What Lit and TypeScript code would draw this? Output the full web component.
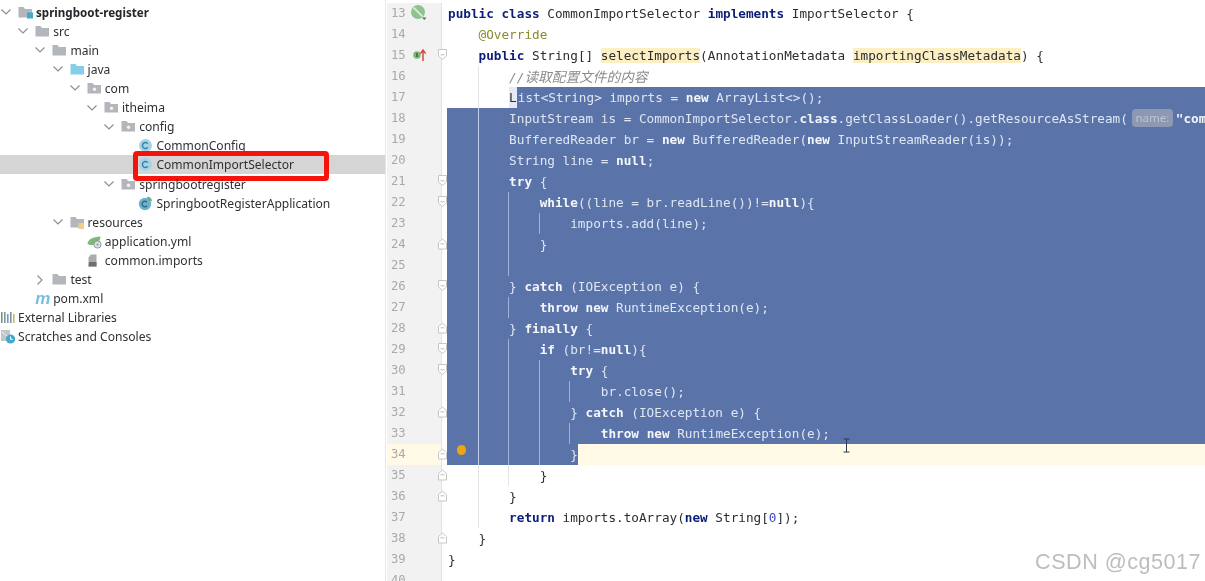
import { LitElement, html, css, svg, nothing } from "lit";
import { customElement } from "lit/decorators.js";

type TreeRow = { d: number; icon: string; label: string; chev?: "down" | "right" | "none"; bold?: boolean; selected?: boolean };

const tree: TreeRow[] = [
  { d: 0, icon: "module", label: "springboot-register", chev: "down", bold: true },
  { d: 1, icon: "folder", label: "src", chev: "down" },
  { d: 2, icon: "folder", label: "main", chev: "down" },
  { d: 3, icon: "blue", label: "java", chev: "down" },
  { d: 4, icon: "pkg", label: "com", chev: "down" },
  { d: 5, icon: "pkg", label: "itheima", chev: "down" },
  { d: 6, icon: "pkg", label: "config", chev: "down" },
  { d: 7, icon: "class", label: "CommonConfig" },
  { d: 7, icon: "class", label: "CommonImportSelector", selected: true },
  { d: 6, icon: "pkg", label: "springbootregister", chev: "down" },
  { d: 7, icon: "spring", label: "SpringbootRegisterApplication" },
  { d: 3, icon: "res", label: "resources", chev: "down" },
  { d: 4, icon: "yml", label: "application.yml" },
  { d: 4, icon: "file", label: "common.imports" },
  { d: 2, icon: "folder", label: "test", chev: "right" },
  { d: 1, icon: "pom", label: "pom.xml" },
  { d: -1, icon: "libs", label: "External Libraries" },
  { d: -1, icon: "scratch", label: "Scratches and Consoles" },
];

type Line = {
  n: number;
  before?: string;
  mark?: string;
  selected?: string;
  caret?: boolean;
  guides?: number[];
  fold?: "down" | "up";
  icon?: "bean" | "impl" | "bulb";
};

const P8 = "        ";
const lines: Line[] = [
  { n: 13, before: "public class CommonImportSelector implements ImportSelector {", icon: "bean" },
  { n: 14, before: "    @Override" },
  { n: 15, before: "    public String[] selectImports(AnnotationMetadata importingClassMetadata) {", fold: "down", icon: "impl" },
  { n: 16, before: P8 + "//读取配置文件的内容", guides: [4] },
  { n: 17, before: P8, mark: "L", selected: "ist<String> imports = new ArrayList<>();", guides: [4] },
  { n: 18, selected: P8 + "InputStream is = CommonImportSelector.class.getClassLoader().getResourceAsStream(⟦name:⟧\"common.imports\");", guides: [4] },
  { n: 19, selected: P8 + "BufferedReader br = new BufferedReader(new InputStreamReader(is));", guides: [4] },
  { n: 20, selected: P8 + "String line = null;", guides: [4] },
  { n: 21, selected: P8 + "try {", guides: [4], fold: "down" },
  { n: 22, selected: P8 + "    while((line = br.readLine())!=null){", guides: [4, 8], fold: "down" },
  { n: 23, selected: P8 + "        imports.add(line);", guides: [4, 8, 12] },
  { n: 24, selected: P8 + "    }", guides: [4, 8], fold: "up" },
  { n: 25, selected: " ", guides: [4, 8] },
  { n: 26, selected: P8 + "} catch (IOException e) {", guides: [4], fold: "down" },
  { n: 27, selected: P8 + "    throw new RuntimeException(e);", guides: [4, 8] },
  { n: 28, selected: P8 + "} finally {", guides: [4], fold: "up" },
  { n: 29, selected: P8 + "    if (br!=null){", guides: [4, 8], fold: "down" },
  { n: 30, selected: P8 + "        try {", guides: [4, 8, 12], fold: "down" },
  { n: 31, selected: P8 + "            br.close();", guides: [4, 8, 12, 16] },
  { n: 32, selected: P8 + "        } catch (IOException e) {", guides: [4, 8, 12], fold: "up" },
  { n: 33, selected: P8 + "            throw new RuntimeException(e);", guides: [4, 8, 12, 16] },
  { n: 34, selected: P8 + "        }", caret: true, guides: [4, 8, 12], fold: "up", icon: "bulb" },
  { n: 35, before: P8 + "    }", guides: [4, 8], fold: "up" },
  { n: 36, before: P8 + "}", guides: [4], fold: "up" },
  { n: 37, before: P8 + "return imports.toArray(new String[0]);", guides: [4] },
  { n: 38, before: "    }", fold: "up" },
  { n: 39, before: "}" },
  { n: 40, before: " " },
];

const TOKEN = /(\b(?:public|class|implements|new|null|try|while|catch|throw|finally|if|return)\b|@Override|selectImports|importingClassMetadata|⟦name:⟧|"common\.imports"|\/\/.*|\b0\b)/;
const KW = /^(public|class|implements|new|null|try|while|catch|throw|finally|if|return)$/;

function tokens(text: string) {
  return text.split(TOKEN).map((t) => {
    if (!t) return nothing;
    if (KW.test(t)) return html`<span class="kw">${t}</span>`;
    if (t === "@Override") return html`<span class="ann">${t}</span>`;
    if (t === "selectImports" || t === "importingClassMetadata") return html`<span class="hl">${t}</span>`;
    if (t === "⟦name:⟧") return html`<span class="hint">name:</span>`;
    if (t.startsWith('"')) return html`<span class="str">${t}</span>`;
    if (t.startsWith("//")) return html`<span class="cm">//<span class="cjk">${t.slice(2)}</span></span>`;
    if (t === "0") return html`<span class="zero">${t}</span>`;
    return t;
  });
}

const folderPath = "M0.5 2h5l1.5 2h7v8.5h-13.5z";

function treeIcon(name: string) {
  const body = (() => {
    switch (name) {
      case "module":
        return svg`<path d=${folderPath} fill="#b3b6bb"/><rect x="9" y="7.5" width="6" height="6" fill="#3fa9d0"/>`;
      case "folder":
        return svg`<path d=${folderPath} fill="#b3b6bb"/>`;
      case "blue":
        return svg`<path d=${folderPath} fill="#86cdea"/>`;
      case "pkg":
        return svg`<path d=${folderPath} fill="#b3b6bb"/><circle cx="7.5" cy="8.2" r="1.7" fill="#f4f4f4"/>`;
      case "res":
        return svg`<path d=${folderPath} fill="#b3b6bb"/><rect x="8.5" y="8" width="5.5" height="6" fill="#f0cd8a"/>`;
      case "class":
        return svg`<circle cx="7.5" cy="7.5" r="6.5" fill="#a5d3e7"/><path d="M9.8 5.6a3 3 0 1 0 0 3.8" fill="none" stroke="#3c7f9f" stroke-width="1.4"/>`;
      case "spring":
        return svg`<circle cx="7" cy="8" r="6.2" fill="#6fb1cf"/><path d="M9 6.2a2.8 2.8 0 1 0 0 3.6" fill="none" stroke="#2f6b87" stroke-width="1.4"/><path d="M9 0.8c3 0 4.8 1.4 5 4.4-2.6.4-4.8-1-5-4.4z" fill="#6cb37a"/>`;
      case "yml":
        return svg`<path d="M0.5 10C1 5 6 3 13.5 2.5 13 8 10 11.5 3 11z" fill="#7db878"/><circle cx="10.5" cy="10.5" r="3.6" fill="#dfe3e8" stroke="#8f979f" stroke-width="1"/><circle cx="10.5" cy="10.5" r="1.1" fill="#8f979f"/>`;
      case "file":
        return svg`<path d="M4 1.5h5.5v12h-8v-9z" fill="#a9abad"/><path d="M2 9h7.5v4.5h-8z" fill="#6d6f72"/>`;
      case "libs":
        return svg`<rect x="1" y="2" width="1.6" height="11" fill="#5aa58a"/><rect x="4" y="2" width="1.6" height="11" fill="#8a8f96"/><rect x="7" y="4" width="1.6" height="9" fill="#5aa5c8"/><rect x="10" y="2" width="1.6" height="11" fill="#8a8f96"/><rect x="13" y="4" width="1.6" height="9" fill="#c9b871"/>`;
      case "scratch":
        return svg`<path d="M1 1h9v5l-4 6h-5z" fill="#c3c6c9"/><path d="M2 3l5 4" stroke="#f4f4f4" stroke-width="1"/><circle cx="10.5" cy="10" r="4.6" fill="#3fa9d0"/><path d="M10.5 7.5v2.8h2.2" fill="none" stroke="#fff" stroke-width="1"/>`;
      default:
        return nothing;
    }
  })();
  return html`<svg class="ticon" viewBox="0 0 15 15" width="15" height="15">${body}</svg>`;
}

function chevron(dir: "down" | "right") {
  const d = dir === "down" ? "M1.5 3.5 6 8l4.5-4.5" : "M3.5 1.5 8 6l-4.5 4.5";
  return html`<svg class="chev" viewBox="0 0 12 12" width="12" height="12"><path d=${d} fill="none" stroke="#8a8c8f" stroke-width="1.1"/></svg>`;
}

function foldMark(dir: "down" | "up") {
  const d = dir === "down" ? "M0.5 0.5h8v6.5l-4 3.5-4-3.5z" : "M0.5 11v-6.5l4-3.5 4 3.5v6.5z";
  return html`<svg class="fold" viewBox="0 0 9 12" width="9" height="12"><path d=${d} fill="#fff" stroke="#c6c6c6" stroke-width="1"/><path d="M2.5 5.8h4" stroke="#bdbdbd" stroke-width="1"/></svg>`;
}

function gutterIcon(name?: string) {
  if (name === "bean")
    return html`<svg class="gicon bean" viewBox="0 0 18 18" width="18" height="18"><circle cx="8" cy="8" r="7" fill="#8fc28c"/><path d="M3.5 3.5l9 9" stroke="#d6ead4" stroke-width="1.8"/><path d="M12 13.5h4.5l-2.2 2.4z" fill="#5c6b5c"/></svg>`;
  if (name === "impl")
    return html`<svg class="gicon" viewBox="0 0 18 18" width="18" height="18"><circle cx="5" cy="9" r="3.8" fill="#7db878"/><rect x="4.3" y="7" width="1.4" height="4" fill="#2e5f33"/><path d="M11 15V5M8.4 7.6 11 4l2.6 3.6" fill="none" stroke="#d9483b" stroke-width="1.5"/></svg>`;
  return nothing;
}

@customElement("app-root")
export class AppRoot extends LitElement {
  static styles = css`
    :host {
      display: flex;
      width: 1205px;
      height: 581px;
      overflow: hidden;
      position: relative;
      background: #fff;
      filter: blur(0.45px);
    }
    .side {
      width: 385px;
      flex: none;
      padding-top: 2.5px;
      box-sizing: border-box;
      font-family: "Noto Sans", sans-serif;
      font-size: 12.08px;
      color: #2e3033;
    }
    .row {
      height: 19.12px;
      display: flex;
      align-items: center;
      position: relative;
      white-space: nowrap;
    }
    .row.sel {
      background: #d5d5d5;
    }
    .row.bold {
      font-weight: 700;
      font-size: 11.6px;
      color: #23262a;
    }
    .chevbox {
      width: 18px;
      flex: none;
      display: flex;
    }
    .iconbox {
      width: 18px;
      flex: none;
      display: flex;
    }
    .ticon {
      display: block;
    }
    .pom {
      font-family: "Liberation Sans", sans-serif;
      font-style: italic;
      font-weight: 700;
      font-size: 17px;
      line-height: 15px;
      color: #74c0e2;
    }
    .redbox {
      position: absolute;
      left: 133px;
      top: -4px;
      width: 196px;
      height: 30px;
      box-sizing: border-box;
      border: 5.5px solid #f5140c;
      border-radius: 4px;
    }
    .editor {
      flex: 1;
      min-width: 0;
      padding-top: 2.5px;
      font-family: "DejaVu Sans Mono", monospace;
      font-size: 12.7px;
      color: #2b2d30;
      border-left: 1px solid #e6e6e6;
    }
    .ln {
      height: 21.04px;
      display: flex;
      white-space: pre;
      line-height: 21px;
    }
    .gutter {
      width: 61px;
      flex: none;
      display: flex;
      position: relative;
      box-sizing: border-box;
      background: linear-gradient(to right, #fff 1px, #f2f2f2 1px, #f2f2f2 55px, #e3e3e3 55px, #e3e3e3 56px, #fff 56px);
    }
    .ln.caret .gutter {
      background: linear-gradient(to right, #fff 1px, #fff9e6 1px, #fff9e6 55px, #e3e3e3 55px, #e3e3e3 56px, #fff 56px);
    }
    .num {
      width: 20px;
      margin-left: 5px;
      color: #a9a9a9;
      font-size: 12.2px;
    }
    .gicon {
      display: block;
      margin-top: 1px;
      margin-left: 1px;
    }
    .gicon.bean {
      margin-left: -1px;
    }
    .fold {
      position: absolute;
      left: 52px;
      top: 4px;
    }
    .code {
      flex: 1;
      min-width: 0;
      display: flex;
      position: relative;
      overflow: hidden;
    }
    .seg {
      padding-left: 1px;
    }
    .seg + .seg {
      padding-left: 0;
    }
    .s {
      background: #5a74aa;
      color: #dfe6f2;
    }
    .s .kw {
      color: #f4f6fb;
    }
    .s .str {
      color: #f4f6fb;
      font-weight: 700;
    }
    .fill {
      flex: 1;
    }
    .caretfill {
      background: #fff9e6;
    }
    .marked {
      background: #e3eaf6;
    }
    .kw {
      font-weight: 700;
      color: #0b1f78;
    }
    .ann {
      color: #8a8a2e;
    }
    .hl {
      background: #fcefc4;
    }
    .zero {
      color: #3a46c8;
    }
    .cm {
      color: #8c8c8c;
      font-style: italic;
    }
    .cjk {
      font-family: "Noto Sans CJK SC", sans-serif;
      font-size: 13.7px;
    }
    .str {
      color: #0b7a2e;
      font-weight: 700;
    }
    .hint {
      display: inline-block;
      font-family: "Noto Sans", sans-serif;
      font-size: 11.5px;
      line-height: 18px;
      height: 18px;
      width: 41px;
      text-align: center;
      margin: 0 3px 0 4px;
      border-radius: 4px;
      background: #8d99b3;
      color: #bcc4d2;
      vertical-align: 1px;
    }
    .guide {
      position: absolute;
      top: 0;
      bottom: 0;
      width: 1px;
      background: #e4e4e4;
    }
    .guide.on {
      background: #9fb3da;
    }
    .guide.first.on {
      background: #c1d0ec;
    }
    .bulb {
      position: absolute;
      left: 9.5px;
      top: 1px;
      width: 9.5px;
      height: 9.5px;
      border-radius: 50%;
      background: #eda512;
    }
    .cursor {
      position: absolute;
      left: 842px;
      top: 438px;
      display: block;
    }
    .wm {
      position: absolute;
      right: 4px;
      bottom: 6px;
      font-family: "Liberation Sans", sans-serif;
      font-size: 21.6px;
      line-height: 26px;
      letter-spacing: 0.5px;
      color: #bdbdbd;
      text-shadow: 0 0 1px #fff;
      white-space: nowrap;
    }
  `;

  private renderTreeRow(r: TreeRow) {
    const pad = r.d < 0 ? 0 : r.d * 17.2;
    return html`<div class="row ${r.selected ? "sel" : ""} ${r.bold ? "bold" : ""}" style="padding-left:${pad}px">
      ${r.d >= 0 ? html`<span class="chevbox">${r.chev && r.chev !== "none" ? chevron(r.chev) : nothing}</span>` : nothing}
      <span class="iconbox">${r.icon === "pom" ? html`<span class="pom">m</span>` : treeIcon(r.icon)}</span>
      <span>${r.label}</span>
      ${r.selected ? html`<div class="redbox"></div>` : nothing}
    </div>`;
  }

  private renderLine(l: Line) {
    const fullSel = l.selected !== undefined && l.before === undefined && !l.caret;
    const inSel = l.selected !== undefined;
    return html`<div class="ln ${l.caret ? "caret" : ""}">
      <div class="gutter">
        <span class="num">${l.n}</span>
        ${gutterIcon(l.icon)}
        ${l.fold ? foldMark(l.fold) : nothing}
      </div>
      <div class="code">
        ${l.before !== undefined ? html`<span class="seg">${tokens(l.before)}</span>` : nothing}
        ${l.mark ? html`<span class="marked">${l.mark}</span>` : nothing}
        ${l.selected !== undefined
          ? html`<span class="seg s ${fullSel || l.mark ? "fill" : ""}">${tokens(l.selected)}</span>`
          : nothing}
        ${l.caret ? html`<span class="fill caretfill"></span>` : nothing}
        ${(l.guides ?? []).map(
          (c, i) => html`<span class="guide ${i === 0 ? "first" : ""} ${inSel && l.n !== 17 ? "on" : ""}" style="left:${c * 7.645}px"></span>`
        )}
        ${l.icon === "bulb" ? html`<span class="bulb"></span>` : nothing}
      </div>
    </div>`;
  }

  render() {
    return html`
      <div class="side">${tree.map((r) => this.renderTreeRow(r))}</div>
      <div class="editor">${lines.map((l) => this.renderLine(l))}</div>
      <svg class="cursor" viewBox="0 0 9 15" width="9" height="15"><path d="M1.5 1h6M4.5 1v13M1.5 14h6" fill="none" stroke="#2c3a55" stroke-width="1"/></svg>
      <div class="wm">CSDN @cg5017</div>
    `;
  }
}
